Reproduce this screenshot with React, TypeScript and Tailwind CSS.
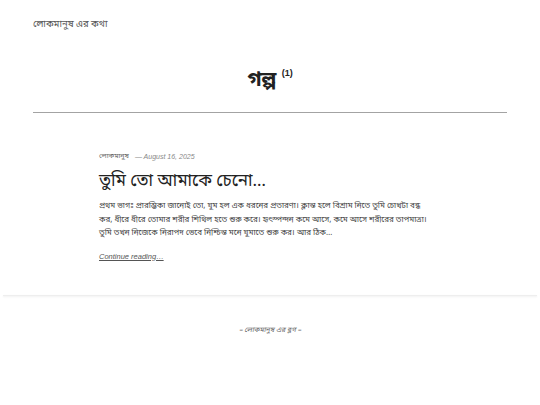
import React from 'react';

const bn = "font-['Noto_Sans_Bengali','Noto_Sans','DejaVu_Sans','Liberation_Sans',sans-serif]";

export default function App() {
  return (
    <div className={`min-h-[405px] w-[540px] bg-white text-[#333] ${bn}`}>
      {/* Header */}
      <header className="px-[33px] pt-[11px]">
        <a className="text-[9.5px] leading-[18px] text-[#555]">লোকমানুষ এর কথা</a>
      </header>

      {/* Archive title */}
      <div className="mx-[33px] mt-[33px] border-b border-[#a3a3a3] pb-[18px] text-center">
        <h1 className="text-[21px] font-bold leading-[26px] text-[#222]">
          গল্প <sup className="relative -top-[10px] font-['Liberation_Sans',sans-serif] text-[9px] font-bold">(1)</sup>
        </h1>
      </div>

      {/* Post */}
      <main className="pb-[32px] pt-[39px]">
        <article className="mx-auto w-[342px]">
          <div className="flex items-center gap-[6px] text-[7px] leading-[10px] text-[#666]">
            <span>লোকমানুষ</span>
            <span className="font-['Liberation_Sans',sans-serif] italic text-[#888]">— August 16, 2025</span>
          </div>
          <h2 className="mt-[5px] text-[17px] leading-[30px] text-[#222]">তুমি তো আমাকে চেনো…</h2>
          <p className="mt-[3px] max-w-[330px] text-[8px] leading-[13.5px] text-[#444]">
            প্রথম ভাগঃ প্রারম্ভিকা জানোই তো, ঘুম হল এক ধরনের প্রতারণা। ক্লান্ত হলে বিশ্রাম নিতে তুমি চোখটা বন্ধ কর, ধীরে ধীরে তোমার শরীর শিথিল হতে শুরু করে। হৃৎস্পন্দন কমে আসে, কমে আসে শরীরের তাপমাত্রা। তুমি তখন নিজেকে নিরাপদ ভেবে নিশ্চিন্ত মনে ঘুমাতে শুরু কর। আর ঠিক…
          </p>
          <a className="mt-[10px] block font-['Liberation_Sans',sans-serif] text-[7.5px] italic leading-[12px] text-[#555] underline">
            Continue reading…
          </a>
        </article>
      </main>

      <div className="mx-[3px] h-px bg-[#eee] shadow-[0_1px_2px_rgba(0,0,0,0.08)]" />

      {/* Footer */}
      <footer className="pt-[30px] text-center text-[7px] italic text-[#666]">
        – লোকমানুষ এর ব্লগ –
      </footer>
    </div>
  );
}
